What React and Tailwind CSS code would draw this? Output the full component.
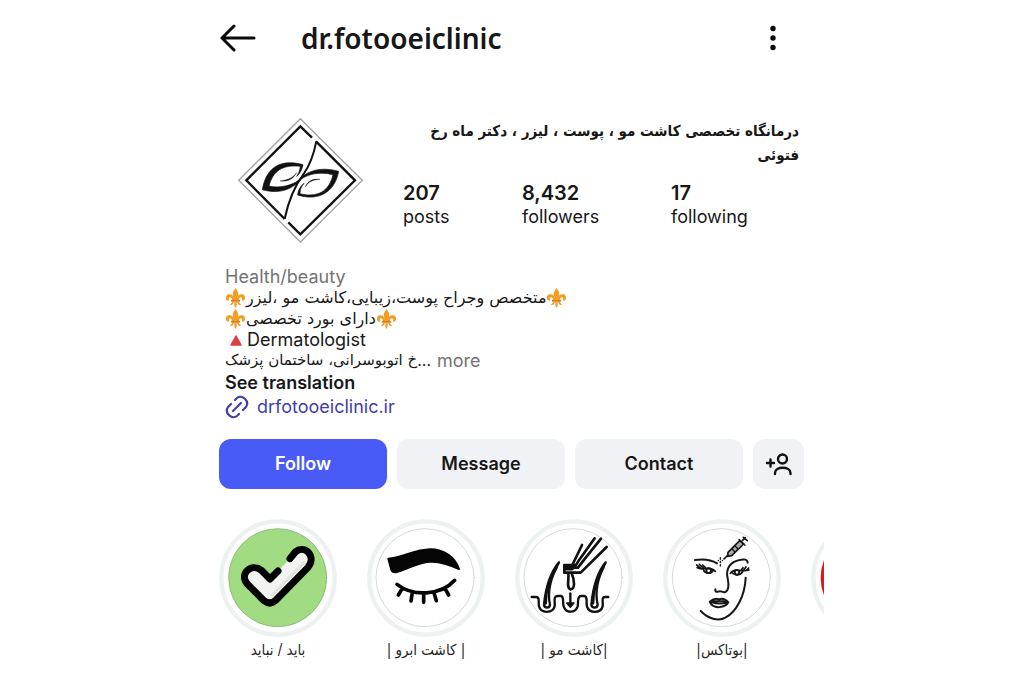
import { useId } from 'react';

const latin = "font-['Inter',sans-serif]";
const persian = "font-['DejaVu_Sans',sans-serif]";

function ClinicLogo() {
  return (
    <svg viewBox="21 21 378 378" className="size-[126px] shrink-0" fill="none" stroke="#111" role="img" aria-label="Clinic logo">
      <path d="M211 26 397 211 211 396 26 211Z" stroke="#a3a3a3" strokeWidth="4" />
      <path d="M246 83 211 49 49 211 164 327" strokeWidth="7" />
      <path d="M175 337 211 373 375 211 258 94" strokeWidth="7" />
      <path d="M259 94C251 134 242 162 222 190C192 230 176 268 164 327" strokeWidth="6" />
      {/* left leaf */}
      <path d="M219 164C160 148 110 164 97 239C146 253 190 240 218 202C192 226 152 236 117 228C129 182 158 163 211 169C210 181 206 191 200 199C210 191 215 181 219 164Z" fill="#111" strokeWidth="2" />
      <path d="M150 213C177 209 192 200 200 188C191 205 174 216 150 213Z" fill="#111" strokeWidth="1" />
      {/* right leaf */}
      <path d="M203 255C262 274 314 250 326 184C274 169 226 181 200 218C228 191 267 184 309 194C298 244 262 264 210 251C210 239 214 229 222 220C210 230 204 241 203 255Z" fill="#111" strokeWidth="2" />
      <path d="M226 231C235 216 246 210 270 208C250 205 233 212 226 231Z" fill="#111" strokeWidth="1" />
    </svg>
  );
}

function Fleur() {
  return (
    <svg viewBox="0 0 60 60" className="w-[21px] h-5 shrink-0" fill="#f39c1f" aria-hidden="true">
      <path d="M30 0C36 8 39 14 38 20C37 26 35 30 35 35H25C25 30 23 26 22 20C21 14 24 8 30 0Z" />
      <path d="M26 35C25 22 17 17 9 19C1 21-1 31 4 37C6 39 10 39 11 36C8 30 11 27 15 28C20 30 20 35 20 38H27Z" />
      <path d="M34 35C35 22 43 17 51 19C59 21 61 31 56 37C54 39 50 39 49 36C52 30 49 27 45 28C40 30 40 35 40 38H33Z" />
      <path d="M27 41H33C34 50 34 54 30 60C26 54 26 50 27 41Z" />
      <path d="M25 41C23 50 18 53 12 49C17 48 18 45 20 41ZM35 41C37 50 42 53 48 49C43 48 42 45 40 41Z" />
      <rect x="16" y="35" width="28" height="6" rx="3" fill="#d97f16" />
    </svg>
  );
}

function CheckArt() {
  return (
    <g strokeLinecap="round" strokeLinejoin="round">
      <circle cx="203" cy="203" r="147" fill="#a1dc82" stroke="#7fa274" strokeWidth="2" />
      <path d="M204 183 180 207 154 181C124 158 86 192 112 222L162 272Q180 287 198 270L294 172C321 139 284 102 256 126L240 146Z" fill="#f3f3f1" />
      <path d="M186 256 282 158" stroke="#e2e3e1" strokeWidth="9" />
      <path d="M204 183 180 207 154 181C124 158 86 192 112 222L162 272Q180 287 198 270L294 172C321 139 284 102 256 126L240 146" fill="none" stroke="#000" strokeWidth="21" />
    </g>
  );
}

function BrowArt() {
  return (
    <g stroke="#050505" strokeLinecap="round" strokeLinejoin="round">
      <circle cx="195" cy="203" r="147" fill="#fff" stroke="#c4c4c4" strokeWidth="2" />
      <path d="M85 146C125 142 165 119 211 118C252 118 286 142 297 177C273 166 249 156 216 155C174 153 143 180 107 187Q97 188 94 180Z" fill="#050505" strokeWidth="6" />
      <path d="M111 223C158 260 242 258 284 211M127 235 115 255M157 248 153 273M191 252V277M222 248 229 272M255 236 266 255" fill="none" strokeWidth="11" />
    </g>
  );
}

function HairArt() {
  return (
    <g stroke="#111" strokeLinecap="round" strokeLinejoin="round" fill="none" strokeWidth="7">
      <circle cx="204" cy="203" r="147" fill="#fff" stroke="#c4c4c4" strokeWidth="2" />
      {/* skin line with three follicles */}
      <path d="M80 261H92C106 260 99 278 102 289C107 311 144 311 149 289C151 276 143 259 158 258H168C178 259 172 279 176 289C183 311 211 310 218 289C221 277 215 259 228 258H238C250 260 242 278 246 289C252 311 287 311 293 289C295 276 288 261 300 261H310" />
      <path d="M162 157C142 181 123 224 117 284C118 295 134 296 135 284C127 250 135 206 162 157Z" />
      <path d="M154 174C132 207 122 245 122 280" strokeWidth="8" />
      <path d="M302 157C282 181 265 224 259 284C261 295 277 296 278 284C270 250 276 206 302 157Z" />
      <path d="M295 173C274 207 264 245 264 280" strokeWidth="8" />
      {/* tweezers and graft */}
      <path d="M231 105 202 165M269 85 223 149 213 165H178V188H227L305 111M288 86 238 148 219 173H184M190 190C193 209 183 232 196 238C212 239 208 209 200 190" strokeWidth="8" />
      <path d="M180 168H210L202 178H180Z" fill="#111" />
      <path d="M196 250V285" />
      <path d="M185 279H207L196 292Z" fill="#111" strokeWidth="4" />
    </g>
  );
}

function FaceArt() {
  return (
    <g stroke="#161616" strokeLinecap="round" strokeLinejoin="round" fill="none" strokeWidth="6">
      <circle cx="199" cy="203" r="147" fill="#fff" stroke="#c4c4c4" strokeWidth="2" />
      <path d="M120 150C145 146 168 149 186 160M278 158C277 148 269 147 258 149C225 154 211 177 218 205C222 224 223 240 211 246C202 249 199 240 189 245C182 247 180 242 181 238" />
      <path d="M137 303C159 326 190 335 211 323C245 306 270 255 272 203" />
      <path d="M196 143V148M196 154V158M196 164V168M190 151V152M202 151V152" strokeWidth="4" />
      {/* eyes */}
      <path d="M126 173C143 185 162 164 181 184M146 181C150 191 169 193 174 181M125 165 139 176M133 163 145 174M143 165 151 173" strokeWidth="5" />
      <circle cx="161" cy="182" r="7" />
      <path d="M226 190C239 171 260 188 282 180M232 189C242 199 260 195 264 182M264 173 258 181M273 171 266 180M281 174 273 182" strokeWidth="5" />
      <circle cx="246" cy="187" r="7" />
      {/* lips */}
      <path d="M164 275C175 266 184 264 193 268C202 264 212 268 220 277C212 292 175 301 164 275ZM169 276C183 272 202 272 216 277C201 282 184 281 169 276Z" />
      {/* syringe */}
      <path d="M207 147 221 133M262 92 271 83M265 82 277 92" strokeWidth="5" />
      <path d="M219 127 254 92 266 102 230 137 218 139Z" fill="#aaa" strokeWidth="5" />
      <path d="M252 88 270 106M232 118 240 126M241 109 249 117" strokeWidth="4" />
    </g>
  );
}

function RedArt() {
  return <circle cx="203" cy="203" r="147" fill="#df1719" />;
}

const highlights = [
  { label: 'باید / نباید', viewBox: '27 27 354 354', cx: 204, Art: CheckArt },
  { label: '| کاشت ابرو |', viewBox: '21 27 354 354', cx: 198, Art: BrowArt },
  { label: '|کاشت مو |', viewBox: '30 27 354 354', cx: 207, Art: HairArt },
  { label: '|بوتاکس|', viewBox: '24 27 354 354', cx: 201, Art: FaceArt },
  { label: '', viewBox: '27 27 354 354', cx: 204, Art: RedArt },
];

function Highlight({ label, viewBox, cx, Art }) {
  const id = useId();
  return (
    <button type="button" aria-labelledby={id} className="w-[118px] shrink-0 flex flex-col items-center">
      <svg viewBox={viewBox} className="size-[118px]" aria-hidden="true">
        <circle cx={cx} cy="204" r="170" fill="#fff" stroke="#edf1f1" strokeWidth="13" />
        <Art />
      </svg>
      <span id={id} dir="rtl" className="font-['DejaVu_Sans_Condensed','DejaVu_Sans',sans-serif] mt-px h-6 text-[15px] leading-6 whitespace-nowrap text-neutral-800">
        {label}
      </span>
    </button>
  );
}

function Stat({ value, label }) {
  return (
    <div className="text-lg leading-6 text-neutral-900">
      <div className="text-xl leading-6 font-semibold">{value}</div>
      <div>{label}</div>
    </div>
  );
}

function App() {
  return (
    <main className={`${latin} w-full max-w-[624px] mx-auto bg-white text-neutral-900 overflow-hidden`}>
      {/* Top bar */}
      <header className="flex items-center h-[76px] pl-5 pr-[38px]">
        <button type="button" aria-label="Back" className="mr-[45px]">
          <svg viewBox="0 0 36 28" className="w-9 h-7" fill="none" stroke="#0a0a0a" strokeWidth="3" strokeLinecap="round" strokeLinejoin="round">
            <path d="M34 14H2M14 2 2 14 14 26" />
          </svg>
        </button>
        <h1 className="font-['Noto_Sans',sans-serif] text-[28px] leading-9 font-semibold">dr.fotooeiclinic</h1>
        <button type="button" aria-label="Options" className="ml-auto">
          <svg viewBox="0 0 26 26" className="size-[26px]" fill="#0a0a0a">
            <circle cx="13" cy="3.500" r="2.700" />
            <circle cx="13" cy="13" r="2.700" />
            <circle cx="13" cy="22.500" r="2.700" />
          </svg>
        </button>
      </header>

      {/* Profile */}
      <section className="flex pt-[41px] pl-[37px] pr-[25px]">
        <ClinicLogo />
        <div className="flex-1 ml-10">
          <h2 dir="rtl" className="font-['DejaVu_Sans_Condensed','DejaVu_Sans',sans-serif] pt-0.5 text-[15px] leading-6 font-bold whitespace-nowrap">
            درمانگاه تخصصی کاشت مو ، پوست ، لیزر ، دکتر ماه رخ
            <br />
            فتوئی
          </h2>
          <div className="grid grid-cols-[119px_149px_1fr] mt-3.5">
            <Stat value="207" label="posts" />
            <Stat value="8,432" label="followers" />
            <Stat value="17" label="following" />
          </div>
        </div>
      </section>

      {/* Bio */}
      <section className="mt-[23px] pl-[25px] text-lg leading-[21px]">
        <p className="text-neutral-500">Health/beauty</p>
        <p className="flex items-center">
          <Fleur />
          <span dir="rtl" className={`${persian} text-base leading-[21px]`}>متخصص وجراح پوست،زیبایی،کاشت مو ،لیزر</span>
          <Fleur />
        </p>
        <p className="flex items-center">
          <Fleur />
          <span dir="rtl" className={`${persian} text-base leading-[21px]`}>دارای بورد تخصصی</span>
          <Fleur />
        </p>
        <p className="flex items-center">
          <svg viewBox="0 0 22 20" className="w-[22px] h-5" aria-hidden="true">
            <path d="M11 6 16 15H6Z" fill="#dc4046" stroke="#dc4046" strokeWidth="1.5" strokeLinejoin="round" />
          </svg>
          Dermatologist
        </p>
        <p className="flex items-center">
          <span dir="rtl" className={`${persian} text-[15px] leading-[21px]`}>خ اتوبوسرانی، ساختمان پزشک</span>
          <span className="text-base leading-[21px]">...</span>
          <button type="button" className="ml-1.5 text-neutral-500">more</button>
        </p>
        <button type="button" className="block leading-6 font-semibold">See translation</button>
        <a href="#website" className="flex items-center gap-2 leading-6 text-[#413eaa]">
          <svg viewBox="0 0 24 24" className="size-6" fill="none" stroke="currentColor" strokeWidth="2.2" strokeLinecap="round">
            <path d="M8 16 16 8M10 5 12 3C17-1 25 6 21 12L18 15M14 19 12 21C7 25-1 18 3 12L6 9" />
          </svg>
          drfotooeiclinic.ir
        </a>
      </section>

      {/* Actions */}
      <div className="flex gap-2.5 mt-5 pl-[19px] pr-5 text-lg font-semibold">
        <button type="button" className="flex-1 h-[50px] rounded-xl bg-[#485bf7] text-white">Follow</button>
        <button type="button" className="flex-1 h-[50px] rounded-xl bg-[#f1f2f5]">Message</button>
        <button type="button" className="flex-1 h-[50px] rounded-xl bg-[#f1f2f5]">Contact</button>
        <button type="button" aria-label="Suggested accounts" className="w-[51px] h-[50px] rounded-xl bg-[#f1f2f5] flex items-center justify-center">
          <svg viewBox="0 0 28 24" className="w-7 h-6" fill="none" stroke="#111" strokeWidth="2.4" strokeLinecap="round">
            <path d="M2 11H9M5.500 7.500V14.500" />
            <circle cx="17.500" cy="7" r="4.500" />
            <path d="M10 22V21C10 14 25.500 14 25.500 21V22" />
          </svg>
        </button>
      </div>

      {/* Story highlights */}
      <section className="flex gap-[30px] mt-[30px] pl-[19px] overflow-hidden">
        {highlights.map((item, index) => (
          <Highlight key={index} {...item} />
        ))}
      </section>
    </main>
  );
}

export default App;
